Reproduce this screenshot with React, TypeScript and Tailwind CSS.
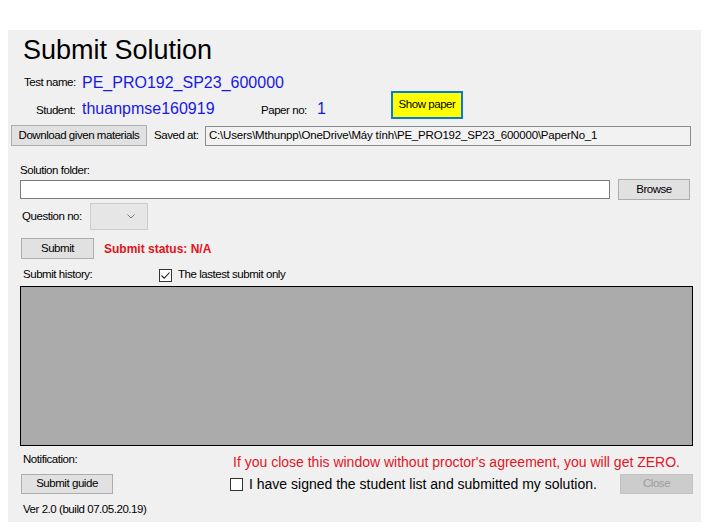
import React from 'react';

const font = { fontFamily: '"Liberation Sans", Arial, sans-serif' };

const btn =
  'flex items-center justify-center bg-[#e1e1e1] border border-[#adadad] text-[11.5px] tracking-[-0.45px] text-black';

const CheckBox: React.FC<{ checked?: boolean }> = ({ checked }) => (
  <div className="w-[13px] h-[13px] border border-[#333333] bg-white flex items-center justify-center shrink-0">
    {checked && (
      <svg viewBox="0 0 11 11" className="w-[11px] h-[11px]">
        <path d="M1.5 5.5 L4.2 8.2 L9.5 2.5" fill="none" stroke="#222" strokeWidth="1.1" />
      </svg>
    )}
  </div>
);

export default function App() {
  return (
    <div className="w-[709px] h-[531px] bg-white pt-[30px] pl-[8px]" style={font}>
      <div className="w-[693px] h-[492px] bg-[#f0f0f0] flex flex-col text-[11.5px] tracking-[-0.45px] text-black">
        {/* title */}
        <div className="mt-[5px] ml-[15px] h-[30px] text-[27px] leading-[30px] tracking-normal">Submit Solution</div>

        {/* test name */}
        <div className="mt-[9px] h-[18px] flex items-center">
          <span className="ml-[16px] w-[58px]">Test name:</span>
          <span className="text-[16px] tracking-normal text-[#1818e6]">PE_PRO192_SP23_600000</span>
        </div>

        {/* student */}
        <div className="h-[27px] flex items-start">
          <span className="ml-[28px] w-[46px] mt-[9px] h-[18px] leading-[18px]">Student:</span>
          <span className="w-[179px] mt-[8px] h-[18px] leading-[18px] text-[16px] tracking-normal text-[#1818e6]">
            thuanpmse160919
          </span>
          <span className="w-[56px] mt-[9px] h-[18px] leading-[18px]">Paper no:</span>
          <span className="w-[74px] mt-[8px] h-[18px] leading-[18px] text-[16px] tracking-normal text-[#1818e6]">1</span>
          <div className="-mt-[1px] w-[72px] h-[28px] bg-[#ffff00] border-2 border-[#0a78d7] flex items-center justify-center">
            Show paper
          </div>
        </div>

        {/* download row */}
        <div className="mt-[6px] h-[21px] flex items-center">
          <div className={`${btn} ml-[3px] w-[136px] h-[21px]`}>Download given materials</div>
          <span className="ml-[7px] w-[51px]">Saved at:</span>
          <div className="w-[486px] h-[20px] bg-[#f2f2f2] border border-[#8c8c8c] flex items-center pl-[3px] whitespace-nowrap overflow-hidden tracking-[-0.2px]">
            C:\Users\Mthunpp\OneDrive\Máy tính\PE_PRO192_SP23_600000\PaperNo_1
          </div>
        </div>

        {/* solution folder */}
        <div className="mt-[17px] ml-[12px] h-[14px] leading-[14px]">Solution folder:</div>
        <div className="mt-[2px] h-[21px] flex items-center">
          <div className="ml-[12px] w-[590px] h-[19px] bg-white border border-[#7a7a7a]" />
          <div className={`${btn} ml-[8px] w-[72px] h-[21px]`}>Browse</div>
        </div>

        {/* question */}
        <div className="mt-[3px] h-[27px] flex items-center">
          <span className="ml-[14px] w-[68px]">Question no:</span>
          <div className="w-[58px] h-[27px] bg-[#e6e6e6] border border-[#cccccc] flex items-center justify-end pr-[12px]">
            <svg viewBox="0 0 8 5" className="w-[8px] h-[5px]">
              <path d="M0.5 0.5 L4 4 L7.5 0.5" fill="none" stroke="#7a7a7a" strokeWidth="1" />
            </svg>
          </div>
        </div>

        {/* submit */}
        <div className="mt-[8px] h-[21px] flex items-center">
          <div className={`${btn} ml-[13px] w-[73px] h-[21px]`}>Submit</div>
          <span className="ml-[10px] text-[12px] tracking-normal font-bold text-[#e3121b]">Submit status: N/A</span>
        </div>

        {/* history */}
        <div className="mt-[8px] h-[16px] flex items-center">
          <span className="ml-[15px] w-[136px]">Submit history:</span>
          <CheckBox checked />
          <span className="ml-[6px]">The lastest submit only</span>
        </div>

        <div className="mt-[3px] ml-[12px] w-[673px] h-[160px] bg-[#ababab] border border-black" />

        {/* notification */}
        <div className="mt-[3px] h-[22px] flex items-start">
          <span className="ml-[15px] w-[210px] mt-[3px] h-[14px] leading-[14px]">Notification:</span>
          <span className="mt-[5px] h-[16px] leading-[16px] text-[14px] tracking-normal text-[#e3151f] whitespace-nowrap">
            If you close this window without proctor's agreement, you will get ZERO.
          </span>
        </div>

        {/* bottom row */}
        <div className="mt-[3px] h-[20px] flex items-center">
          <div className={`${btn} ml-[13px] w-[92px] h-[20px]`}>Submit guide</div>
          <div className="ml-[117px]">
            <CheckBox />
          </div>
          <span className="ml-[6px] text-[14px] tracking-normal whitespace-nowrap">
            I have signed the student list and submitted my solution.
          </span>
          <div className="ml-auto mr-[8px] w-[73px] h-[20px] bg-[#cccccc] border border-[#c2c2c2] flex items-center justify-center text-[#9d9d9d]">
            Close
          </div>
        </div>

        <div className="mt-[8px] ml-[15px] h-[14px] leading-[14px]">Ver 2.0 (build 07.05.20.19)</div>
      </div>
    </div>
  );
}
